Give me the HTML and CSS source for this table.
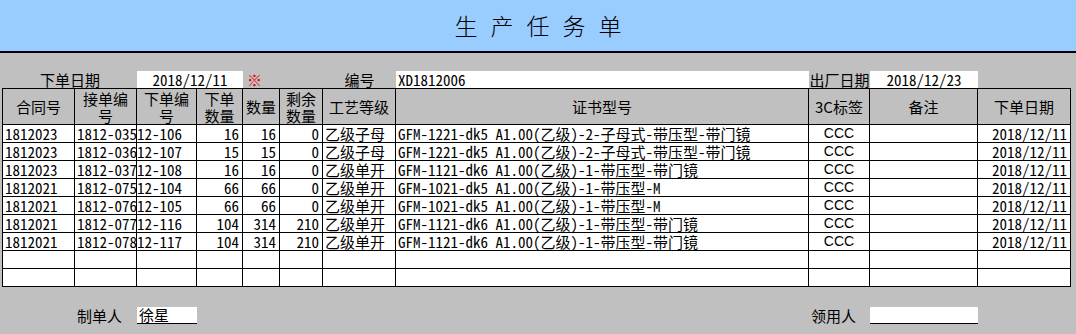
FILE: index.html
```html
<!DOCTYPE html>
<html lang="zh-CN">
  <head>
    <meta charset="UTF-8" />
    <meta name="viewport" content="width=device-width, initial-scale=1.0" />
    <title>生产任务单</title>
    <link rel="stylesheet" href="styles.css">
  </head>
  <body>
    <header class="title">生产任务单</header>
    <div class="sheet">
      <section class="fields info">
        <span class="label span12 center">下单日期</span>
        <span class="box span34 center mono">2018/12/11</span>
        <span class="mark">※</span>
        <span class="label col7 center">编号</span>
        <span class="box mono padLeft">XD1812006</span>
        <span class="label center">出厂日期</span>
        <span class="box center mono">2018/12/23</span>
      </section>

      <table class="order">
        <colgroup>
          <col class="w72" /><col class="w62" /><col class="w60" /><col class="w46" />
          <col class="w37" /><col class="w43" /><col class="w73" /><col class="w413" />
          <col class="w61" /><col class="w108" /><col class="w93" />
        </colgroup>
        <thead>
          <tr>
            <th>合同号</th>
            <th>接单编<br />号</th>
            <th>下单编<br />号</th>
            <th>下单<br />数量</th>
            <th>数量</th>
            <th>剩余<br />数量</th>
            <th>工艺等级</th>
            <th>证书型号</th>
            <th>3C标签</th>
            <th>备注</th>
            <th>下单日期</th>
          </tr>
        </thead>
        <tbody>
          <tr>
            <td>1812023</td><td>1812-0351</td><td class="tight">12-106</td>
            <td class="num">16</td><td class="num">16</td><td class="num">0</td>
            <td>乙级子母</td><td>GFM-1221-dk5 A1.00(乙级)-2-子母式-带压型-带门镜</td>
            <td class="ccc">CCC</td><td></td><td class="num">2018/12/11</td>
          </tr>
          <tr>
            <td>1812023</td><td>1812-0362</td><td class="tight">12-107</td>
            <td class="num">15</td><td class="num">15</td><td class="num">0</td>
            <td>乙级子母</td><td>GFM-1221-dk5 A1.00(乙级)-2-子母式-带压型-带门镜</td>
            <td class="ccc">CCC</td><td></td><td class="num">2018/12/11</td>
          </tr>
          <tr>
            <td>1812023</td><td>1812-0373</td><td class="tight">12-108</td>
            <td class="num">16</td><td class="num">16</td><td class="num">0</td>
            <td>乙级单开</td><td>GFM-1121-dk6 A1.00(乙级)-1-带压型-带门镜</td>
            <td class="ccc">CCC</td><td></td><td class="num">2018/12/11</td>
          </tr>
          <tr>
            <td>1812021</td><td>1812-0754</td><td class="tight">12-104</td>
            <td class="num">66</td><td class="num">66</td><td class="num">0</td>
            <td>乙级单开</td><td>GFM-1021-dk5 A1.00(乙级)-1-带压型-M</td>
            <td class="ccc">CCC</td><td></td><td class="num">2018/12/11</td>
          </tr>
          <tr>
            <td>1812021</td><td>1812-0765</td><td class="tight">12-105</td>
            <td class="num">66</td><td class="num">66</td><td class="num">0</td>
            <td>乙级单开</td><td>GFM-1021-dk5 A1.00(乙级)-1-带压型-M</td>
            <td class="ccc">CCC</td><td></td><td class="num">2018/12/11</td>
          </tr>
          <tr>
            <td>1812021</td><td>1812-0776</td><td class="tight">12-116</td>
            <td class="num">104</td><td class="num">314</td><td class="num">210</td>
            <td>乙级单开</td><td>GFM-1121-dk6 A1.00(乙级)-1-带压型-带门镜</td>
            <td class="ccc">CCC</td><td></td><td class="num">2018/12/11</td>
          </tr>
          <tr>
            <td>1812021</td><td>1812-0787</td><td class="tight">12-117</td>
            <td class="num">104</td><td class="num">314</td><td class="num">210</td>
            <td>乙级单开</td><td>GFM-1121-dk6 A1.00(乙级)-1-带压型-带门镜</td>
            <td class="ccc">CCC</td><td></td><td class="num">2018/12/11</td>
          </tr>
          <tr>
            <td></td><td></td><td></td><td></td><td></td><td></td>
            <td></td><td></td><td></td><td></td><td></td>
          </tr>
          <tr>
            <td></td><td></td><td></td><td></td><td></td><td></td>
            <td></td><td></td><td></td><td></td><td></td>
          </tr>
        </tbody>
      </table>

      <section class="fields foot">
        <span class="label col2 padLeft">制单人</span>
        <span class="box line mono">徐星</span>
        <span class="label col9 padLeft">领用人</span>
        <span class="box line"></span>
      </section>
    </div>
  </body>
</html>
```

FILE: styles.css
```css
* {
  margin: 0;
  padding: 0;
  box-sizing: border-box;
}

body {
  width: 1076px;
  height: 334px;
  overflow: hidden;
  background-color: #c0c0c0;
  color: #000;
  font-family: "Noto Sans CJK SC", sans-serif;
  font-size: 15px;
}

.mono {
  font-family: "Noto Sans Mono CJK SC", "Liberation Mono", "Noto Sans CJK SC", monospace;
}

.title {
  height: 53px;
  background-color: #99ccff;
  border-bottom: 2px solid #000;
  text-align: center;
  font-size: 23px;
  font-weight: 300;
  line-height: 51px;
  letter-spacing: 13px;
  padding-left: 13px;
}

.sheet {
  margin-left: 2px;
}

/* info rows share the table's column grid */
.fields {
  display: grid;
  grid-template-columns: 72px 62px 60px 46px 37px 43px 73px 413px 61px 108px 93px;
  padding-left: 1px;
  line-height: 17px;
}

.info {
  margin-top: 18px;
  height: 17px;
}

.foot {
  margin-top: 20px;
  height: 17px;
}

.span12 { grid-column: 1 / 3; }
.span34 { grid-column: 3 / 5; }
.col2 { grid-column: 2; }
.col7 { grid-column: 7; }
.col9 { grid-column: 9; }

.center { text-align: center; }
.padLeft { padding-left: 2px; }

.box {
  background-color: #fff;
  white-space: nowrap;
}

.box.line {
  border-bottom: 1px solid #000;
  padding-left: 2px;
  line-height: 16px;
}

.mark {
  color: #e00000;
  padding-left: 4px;
}

.order {
  table-layout: fixed;
  width: 1069px;
  border-collapse: separate;
  border-spacing: 0;
  border-left: 1px solid #000;
  border-top: 1px solid #000;
}

.w72 { width: 72px; }
.w62 { width: 62px; }
.w60 { width: 60px; }
.w46 { width: 46px; }
.w37 { width: 37px; }
.w43 { width: 43px; }
.w73 { width: 73px; }
.w413 { width: 413px; }
.w61 { width: 61px; }
.w108 { width: 108px; }
.w93 { width: 93px; }

.order th,
.order td {
  border-right: 1px solid #000;
  border-bottom: 1px solid #000;
  overflow: hidden;
  padding: 0 2px;
}

.order thead tr {
  height: 36px;
}

.order th {
  font-weight: normal;
  background-color: #c0c0c0;
  line-height: 17px;
  text-align: center;
}

.order tbody tr {
  height: 18px;
}

.order td {
  background-color: #fff;
  white-space: nowrap;
  line-height: 17px;
  font-family: "Noto Sans Mono CJK SC", "Liberation Mono", "Noto Sans CJK SC", monospace;
}

.order td.num {
  text-align: right;
  padding-right: 3px;
}

.order td.tight {
  padding-left: 0;
}

.order td.ccc {
  text-align: center;
  font-family: "Liberation Sans", sans-serif;
  font-size: 14px;
}
```
